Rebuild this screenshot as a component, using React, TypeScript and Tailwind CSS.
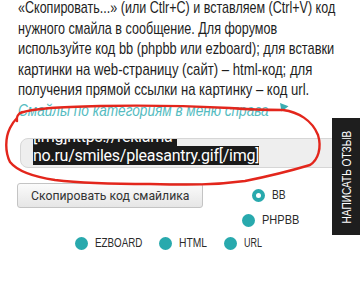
import React, { useLayoutEffect, useRef, useState } from "react";

const sans = { fontFamily: '"Liberation Sans", Arial, sans-serif' };

function Fit({
  text,
  target,
  wCls,
  cls,
  font = sans,
}: {
  text: string;
  target: number;
  wCls: string;
  cls?: string;
  font?: React.CSSProperties;
}) {
  const ref = useRef<HTMLSpanElement>(null);
  const [s, setS] = useState(0.76);
  useLayoutEffect(() => {
    const el = ref.current;
    if (!el) return;
    const w = el.offsetWidth;
    if (w > 0) setS(target / w);
  }, [target, text]);
  return (
    <span className={`inline-flex shrink-0 items-center whitespace-nowrap ${wCls}`}>
      <span
        ref={ref}
        className={`inline-block origin-left whitespace-nowrap ${cls ?? ""}`}
        style={{ ...font, transform: `scaleX(${s})` }}
      >
        {text}
      </span>
    </span>
  );
}

function Radio({
  label,
  target,
  wCls,
  checked,
}: {
  label: string;
  target: number;
  wCls: string;
  checked?: boolean;
}) {
  return (
    <div className="flex items-center gap-[7px]">
      <span className="flex h-[13px] w-[13px] items-center justify-center rounded-full bg-[#28a9ad]">
        {checked && <span className="h-[5px] w-[5px] rounded-full bg-white" />}
      </span>
      <Fit
        text={label}
        target={target}
        wCls={wCls}
        cls="text-[12.5px] leading-none text-[#2a2a2a]"
      />
    </div>
  );
}

export default function App() {
  const lines: [string, number, string][] = [
    ["«Скопировать...» (или Ctlr+C) и вставляем (Ctrl+V) код", 317, "w-[317px]"],
    ["нужного смайла в сообщение. Для форумов", 259, "w-[259px]"],
    ["используйте код bb (phpbb или ezboard); для вставки", 316, "w-[316px]"],
    ["картинки на web-страницу (сайт) – html-код; для", 294, "w-[294px]"],
    ["получения прямой ссылки на картинку – код url.", 291, "w-[291px]"],
  ];
  return (
    <div className="relative h-[281px] w-[360px] overflow-hidden bg-white">
      <div className="mt-[-2px] pl-[18px]">
        <div className="text-[17px] leading-[20.5px] text-[#1e1e1e]">
          {lines.map(([l, t, w]) => (
            <div key={l} className="flex h-[20.5px] items-center">
              <Fit text={l} target={t} wCls={w} />
            </div>
          ))}
          <div className="flex h-[20.5px] items-center">
            <Fit
              text="Смайлы по категориям в меню справа"
              target={251}
              wCls="w-[251px]"
              cls="italic text-[#55bcc1]"
            />
            <svg className="ml-[10px] mt-[-7px]" width="10" height="10" viewBox="0 0 10 10">
              <path d="M1 1 L9.5 4.2 L2.5 9.5 Z" fill="#3aaeb3" />
            </svg>
          </div>
        </div>
      </div>

      <div className="ml-[20px] mt-[17px] h-[30px] w-[340px] overflow-hidden rounded-l-[8px] border border-[#d6d6d6] bg-[#eeeeee]">
        <div
          className="ml-[12px] mt-[-12px] text-[16px] leading-[19px] tracking-[-0.25px]"
          style={{ fontFamily: "Roboto, sans-serif" }}
        >
          <div>
            <span className="bg-[#1a1a1a] text-white">[img]https://reklama-</span>
          </div>
          <div>
            <span className="bg-[#1a1a1a] text-white">no.ru/smiles/pleasantry.gif[/img]</span>
          </div>
        </div>
      </div>

      <div className="ml-[17px] mr-[41px] mt-[15px]">
        <div className="flex">
          <button className="flex h-[25px] w-[186px] shrink-0 items-center rounded-[3px] border border-[#c4c4c4] bg-gradient-to-b from-[#fbfbfb] to-[#e6e6e6] pl-[13px] text-[13px] text-[#333]">
            <Fit
              text="Скопировать код смайлика"
              target={159}
              wCls="w-[159px]"
              font={{ fontFamily: "Roboto, sans-serif" }}
            />
          </button>
          <div className="ml-[16px] flex flex-1 flex-col items-center">
            <div className="flex h-[25px] items-center">
              <Radio label="BB" target={14} wCls="w-[14px]" checked />
            </div>
            <div className="flex h-[25px] items-center pl-[2px]">
              <Radio label="PHPBB" target={37} wCls="w-[37px]" />
            </div>
          </div>
        </div>
        <div className="mt-[4px] flex justify-center gap-[17px]">
          <Radio label="EZBOARD" target={47} wCls="w-[47px]" />
          <Radio label="HTML" target={28} wCls="w-[28px]" />
          <Radio label="URL" target={18} wCls="w-[18px]" />
        </div>
      </div>

      <div className="absolute left-[332px] top-[118px] flex h-[117px] w-[28px] items-center justify-center bg-[#1e1e1e]">
        <div className="flex h-[14px] w-[93px] shrink-0 -rotate-90 items-center">
          <Fit
            text="НАПИСАТЬ ОТЗЫВ"
            target={93}
            wCls="w-[93px]"
            cls="text-[12.5px] leading-none text-white"
          />
        </div>
      </div>

      <svg
        className="pointer-events-none absolute left-0 top-0"
        width="360"
        height="281"
        viewBox="0 0 360 281"
      >
        <path
          d="M22 112 C18 114 16 117 17 121 M20 113 C35 108 60 107 100 106 C150 105 190 106 230 108 C255 110 270 110 283 110 C298 112 312 120 318 135 C322 148 318 160 310 165 C290 171 265 177 245 181 C215 185 190 185 150 184 C110 184 80 183 55 180 C35 177 18 172 10 162 C5 152 5 138 10 128 C12 124 14 121 17 118"
          fill="none"
          stroke="#e3261c"
          strokeWidth="2.4"
          strokeLinecap="round"
        />
      </svg>
    </div>
  );
}
